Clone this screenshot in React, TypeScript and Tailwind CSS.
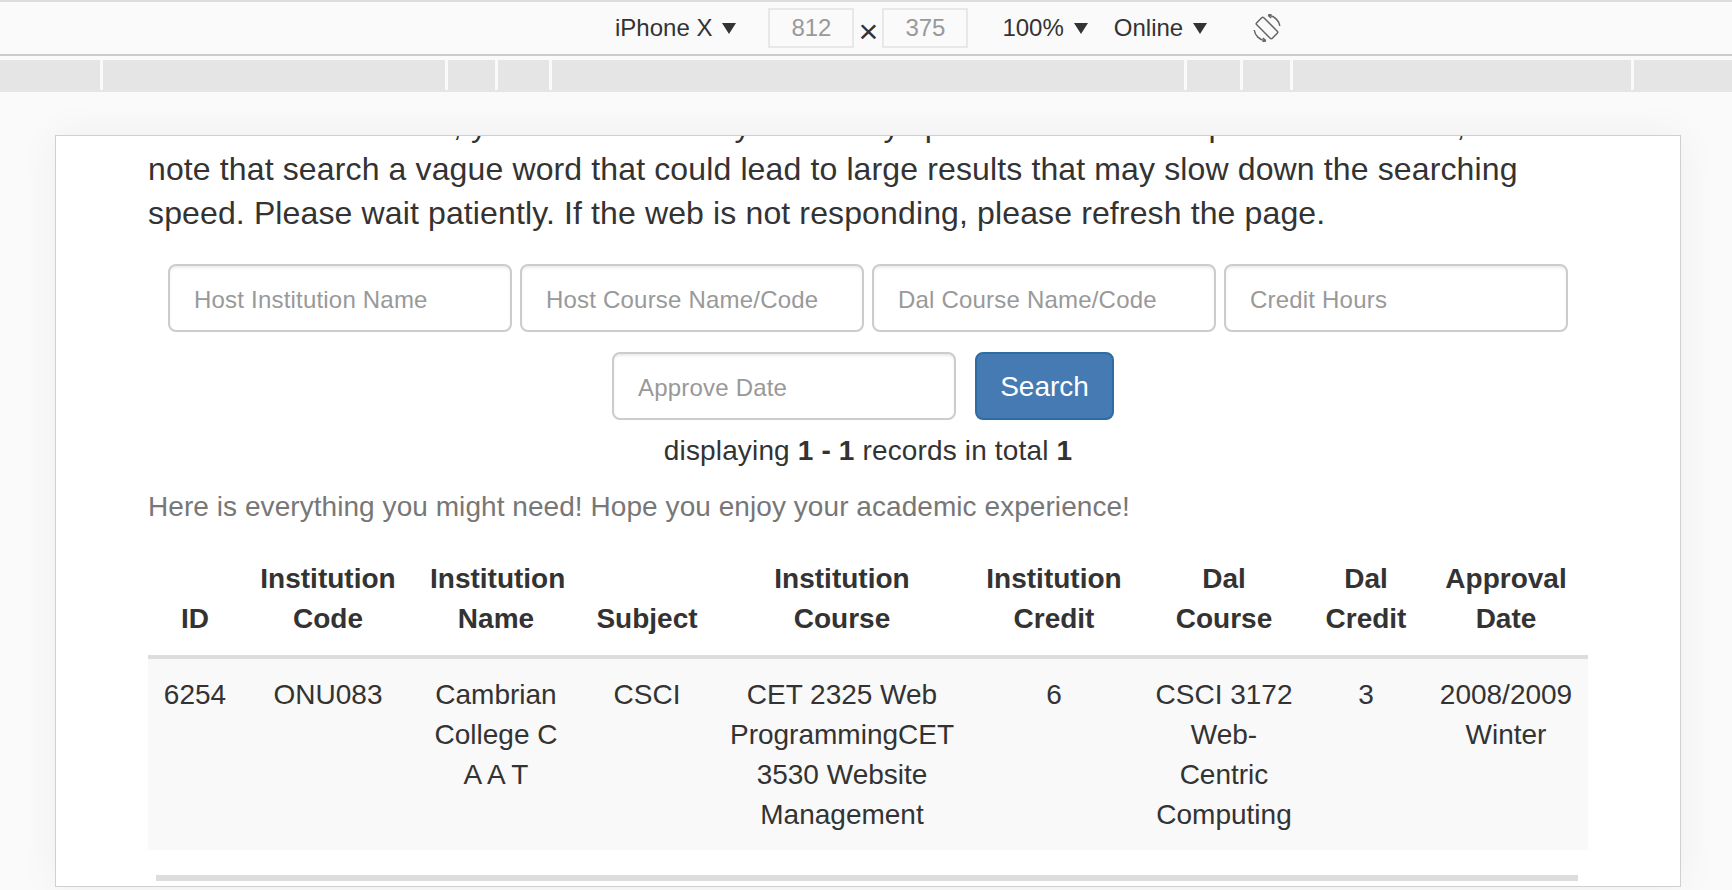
function Caret() {
  return <span className="ml-[10px] inline-block border-x-[7px] border-t-[11px] border-x-transparent border-t-[#333]" />;
}

function Ruler() {
  const segments = [100, 342, 47, 51, 632, 53, 47, 338, 98];
  return (
    <div className="flex h-8 mt-1 bg-[#e5e5e5] gap-[3px] items-start">
      {segments.map((w, i) => (
        <div key={i} className="h-[30px] bg-[#e5e5e5] shadow-[3px_0_0_#fafafa]" style={{ width: w }} />
      ))}
    </div>
  );
}

function Field({ label }: { label: string }) {
  return (
    <input
      readOnly
      placeholder={label}
      className="h-[68px] w-[344px] rounded-lg border-2 border-[#ccc] bg-white px-6 pt-1 text-2xl tracking-[0.2px] text-[#555] placeholder:text-[#999] shadow-[inset_0_2px_2px_rgba(0,0,0,0.075)] outline-none"
    />
  );
}

const headers = [
  ["ID", "w-[94px]"],
  ["Institution Code", "w-[172px]"],
  ["Institution Name", "w-[164px]"],
  ["Subject", "w-[138px]"],
  ["Institution Course", "w-[252px]"],
  ["Institution Credit", "w-[172px]"],
  ["Dal Course", "w-[168px]"],
  ["Dal Credit", "w-[116px]"],
  ["Approval Date", "w-[164px]"],
];
const row = ["6254", "ONU083", "Cambrian College C A A T", "CSCI", "CET 2325 Web ProgrammingCET 3530 Website Management", "6", "CSCI 3172 Web-Centric Computing", "3", "2008/2009 Winter"];

export default function App() {
  return (
    <div className="flex h-[890px] w-[1732px] flex-col overflow-hidden bg-[#fafafa] font-['Liberation_Sans',Arial,sans-serif] text-[#333]">
      <div className="h-0.5 bg-[#dcdcdc]" />
      <div className="flex h-[52px] items-center pl-[615px] text-2xl text-[#333]">
        <span>iPhone X</span>
        <Caret />
        <span className="ml-[32px] flex h-10 w-[86px] items-center justify-center border-2 border-[#e8e8e8] text-[#999]">812</span>
        <span className="mt-[6px] w-[28px] text-center text-[34px] leading-none">×</span>
        <span className="flex h-10 w-[86px] items-center justify-center border-2 border-[#e8e8e8] text-[#999]">375</span>
        <span className="ml-[34px]">100%</span>
        <Caret />
        <span className="ml-[26px]">Online</span>
        <Caret />
        <svg className="ml-[46px]" width="28" height="28" viewBox="0 0 28 28" fill="none" stroke="#666" strokeWidth="1.5">
          <rect x="9" y="3" width="10" height="22" rx="1.5" transform="rotate(-45 14 14)" />
          <path d="M16 1.2A13 13 0 0 1 26.8 12" />
          <path d="M1.2 16A13 13 0 0 0 12 26.8" />
          <path d="M15 1.2l3.5-1M15.2 1.4l3 2.6M13 26.8l-3.5 1M12.8 26.6l-3-2.6" />
        </svg>
      </div>
      <div className="h-0.5 bg-[#ccc]" />
      <Ruler />
      <div className="flex-1 pl-[55px] pt-[43px]">
        <div className="h-[752px] w-[1626px] overflow-hidden border border-[#d0d0d0] bg-white shadow-[0_0_40px_rgba(0,0,0,0.05)]">
          <div className="mt-[-33px] px-[92px] text-[32px] leading-[44px]">
            <p className="tracking-[0.13px]">
              From these database, you can search any course by specific words in the parameters listed, Please
              note that search a vague word that could lead to large results that may slow down the searching
              speed. Please wait patiently. If the web is not responding, please refresh the page.
            </p>
            <div className="mt-[29px] flex flex-wrap justify-center gap-x-2 gap-y-5">
              <Field label="Host Institution Name" />
              <Field label="Host Course Name/Code" />
              <Field label="Dal Course Name/Code" />
              <Field label="Credit Hours" />
            </div>
            <div className="mt-5 flex justify-center gap-[19px] pr-[10px]">
              <Field label="Approve Date" />
              <button className="h-[68px] w-[139px] rounded-lg border-2 border-[#2e6da4] bg-[#457ab3] pt-0.5 text-[28px] text-white">Search</button>
            </div>
            <div className="mt-[11px] text-center text-[28px] leading-10 tracking-[0.15px]">
              displaying <b>1 - 1</b> records in total <b>1</b>
            </div>
            <p className="mt-4 text-[28px] leading-10 tracking-[0.06px] text-[#777]">Here is everything you might need! Hope you enjoy your academic experience!</p>
            <table className="mt-4 w-[1440px] table-fixed border-collapse text-center text-[28px] leading-10">
              <thead>
                <tr className="border-b-4 border-[#ddd]">
                  {headers.map(([h, w]) => (
                    <th key={h} className={`${w} p-4 align-bottom font-bold`}>{h}</th>
                  ))}
                </tr>
              </thead>
              <tbody>
                <tr className="bg-[#f9f9f9]">
                  {row.map((c, i) => (
                    <td key={i} className="px-3 pt-4 pb-[15px] align-top">{c}</td>
                  ))}
                </tr>
              </tbody>
            </table>
            <div className="ml-2 mt-[25px] h-1.5 w-[1422px] bg-[#ddd]" />
          </div>
        </div>
      </div>
    </div>
  );
}
